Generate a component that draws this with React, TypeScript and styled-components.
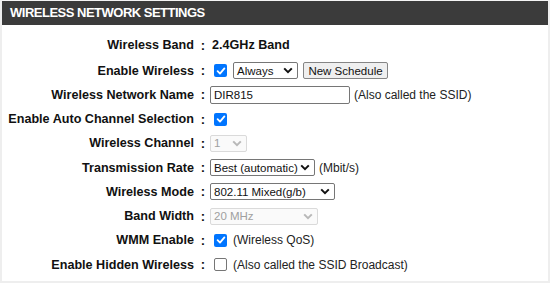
import React from 'react';
import styled, { createGlobalStyle } from 'styled-components';

const GlobalStyle = createGlobalStyle`
  html, body {
    margin: 0;
    padding: 0;
    background: #ffffff;
  }
  body {
    font-family: "Liberation Sans", Arial, sans-serif;
  }
`;

const Frame = styled.div`
  width: 550px;
  height: 283px;
  box-sizing: border-box;
  border: 2px solid #eeeeee;
  border-top: 1px solid #f4f4f4;
  background: #ffffff;
  overflow: hidden;
`;

const Header = styled.div`
  height: 24px;
  background: #3b3b3b;
  color: #ffffff;
  font-family: "Liberation Sans", Arial, sans-serif;
  font-weight: bold;
  font-size: 13px;
  line-height: 24px;
  padding-left: 8px;
  letter-spacing: -0.5px;
`;

const Form = styled.div`
  display: grid;
  grid-template-columns: 192px 16px 1fr;
  grid-template-rows: 27px repeat(9, 24.25px);
  align-items: center;
  padding-top: 6.5px;
`;

const Label = styled.div`
  font-family: "Liberation Sans", Arial, sans-serif;
  font-weight: bold;
  font-size: 12.6px;
  color: #111111;
  text-align: right;
  white-space: nowrap;
`;

const Colon = styled.div`
  font-family: "Liberation Sans", Arial, sans-serif;
  font-weight: bold;
  font-size: 13px;
  color: #111111;
  text-align: center;
  padding-left: 2px;
`;

const Value = styled.div`
  display: flex;
  align-items: center;
  gap: 4px;
  font-family: "Liberation Sans", Arial, sans-serif;
  font-size: 13px;
  color: #111111;
  white-space: nowrap;
`;

const BoldValue = styled.span`
  font-weight: bold;
  font-size: 12.6px;
  padding-left: 2px;
`;

const Note = styled.span`
  font-size: 12px;
  color: #222222;
`;

const Check = styled.span<{ $checked?: boolean }>`
  display: inline-flex;
  align-items: center;
  justify-content: center;
  width: 13px;
  height: 13px;
  margin: 0 2px 0 4px;
  box-sizing: border-box;
  border-radius: 2px;
  background: ${(p) => (p.$checked ? '#0075ff' : '#ffffff')};
  border: ${(p) => (p.$checked ? 'none' : '1px solid #767676')};
`;

const Select = styled.div<{ $w: number; $disabled?: boolean }>`
  display: inline-flex;
  align-items: center;
  justify-content: space-between;
  box-sizing: border-box;
  width: ${(p) => p.$w}px;
  height: 17px;
  padding: 0 4px 0 3px;
  border: 1px solid ${(p) => (p.$disabled ? '#dadada' : '#767676')};
  border-radius: 2px;
  background: ${(p) => (p.$disabled ? '#fafafa' : '#ffffff')};
  color: ${(p) => (p.$disabled ? '#a0a0a0' : '#111111')};
  font-family: "Liberation Sans", Arial, sans-serif;
  font-size: 11.5px;
`;

const Button = styled.div`
  display: inline-flex;
  align-items: center;
  justify-content: center;
  box-sizing: border-box;
  width: 85px;
  height: 17px;
  margin-left: 1px;
  border: 1px solid #858585;
  border-radius: 2px;
  background: #efefef;
  color: #111111;
  font-family: "Liberation Sans", Arial, sans-serif;
  font-size: 11.5px;
`;

const TextInput = styled.div`
  display: inline-flex;
  align-items: center;
  box-sizing: border-box;
  width: 140px;
  height: 18px;
  padding-left: 3px;
  border: 1px solid #767676;
  border-radius: 2px;
  background: #ffffff;
  font-family: "Liberation Sans", Arial, sans-serif;
  font-size: 11.5px;
  color: #111111;
`;

const Tick = () => (
  <svg width="10" height="10" viewBox="0 0 10 10">
    <path d="M1.6 5.2 L4 7.6 L8.4 2.4" fill="none" stroke="#fff" strokeWidth="1.8" strokeLinecap="round" strokeLinejoin="round" />
  </svg>
);

const Chevron = ({ color }: { color: string }) => (
  <svg width="10" height="7" viewBox="0 0 10 7">
    <path d="M1.2 1.4 L5 5.2 L8.8 1.4" fill="none" stroke={color} strokeWidth="2" />
  </svg>
);

const Checkbox = ({ checked }: { checked?: boolean }) => (
  <Check $checked={checked}>{checked && <Tick />}</Check>
);

const Dropdown = ({ w, text, disabled }: { w: number; text: string; disabled?: boolean }) => (
  <Select $w={w} $disabled={disabled}>
    <span>{text}</span>
    <Chevron color={disabled ? '#b8b8b8' : '#111'} />
  </Select>
);

const rows: { label: string; value: React.ReactNode }[] = [
  { label: 'Wireless Band', value: <BoldValue>2.4GHz Band</BoldValue> },
  {
    label: 'Enable Wireless',
    value: (
      <>
        <Checkbox checked />
        <Dropdown w={65} text="Always" />
        <Button>New Schedule</Button>
      </>
    ),
  },
  {
    label: 'Wireless Network Name',
    value: (
      <>
        <TextInput>DIR815</TextInput>
        <Note>(Also called the SSID)</Note>
      </>
    ),
  },
  { label: 'Enable Auto Channel Selection', value: <Checkbox checked /> },
  { label: 'Wireless Channel', value: <Dropdown w={37} text="1" disabled /> },
  {
    label: 'Transmission Rate',
    value: (
      <>
        <Dropdown w={105} text="Best (automatic)" />
        <Note>(Mbit/s)</Note>
      </>
    ),
  },
  { label: 'Wireless Mode', value: <Dropdown w={125} text="802.11 Mixed(g/b)" /> },
  { label: 'Band Width', value: <Dropdown w={108} text="20 MHz" disabled /> },
  {
    label: 'WMM Enable',
    value: (
      <>
        <Checkbox checked />
        <Note>(Wireless QoS)</Note>
      </>
    ),
  },
  {
    label: 'Enable Hidden Wireless',
    value: (
      <>
        <Checkbox />
        <Note>(Also called the SSID Broadcast)</Note>
      </>
    ),
  },
];

const App: React.FC = () => (
  <>
    <GlobalStyle />
    <Frame>
      <Header>WIRELESS NETWORK SETTINGS</Header>
      <Form>
        {rows.map((r) => (
          <React.Fragment key={r.label}>
            <Label>{r.label}</Label>
            <Colon>:</Colon>
            <Value>{r.value}</Value>
          </React.Fragment>
        ))}
      </Form>
    </Frame>
  </>
);

export default App;
